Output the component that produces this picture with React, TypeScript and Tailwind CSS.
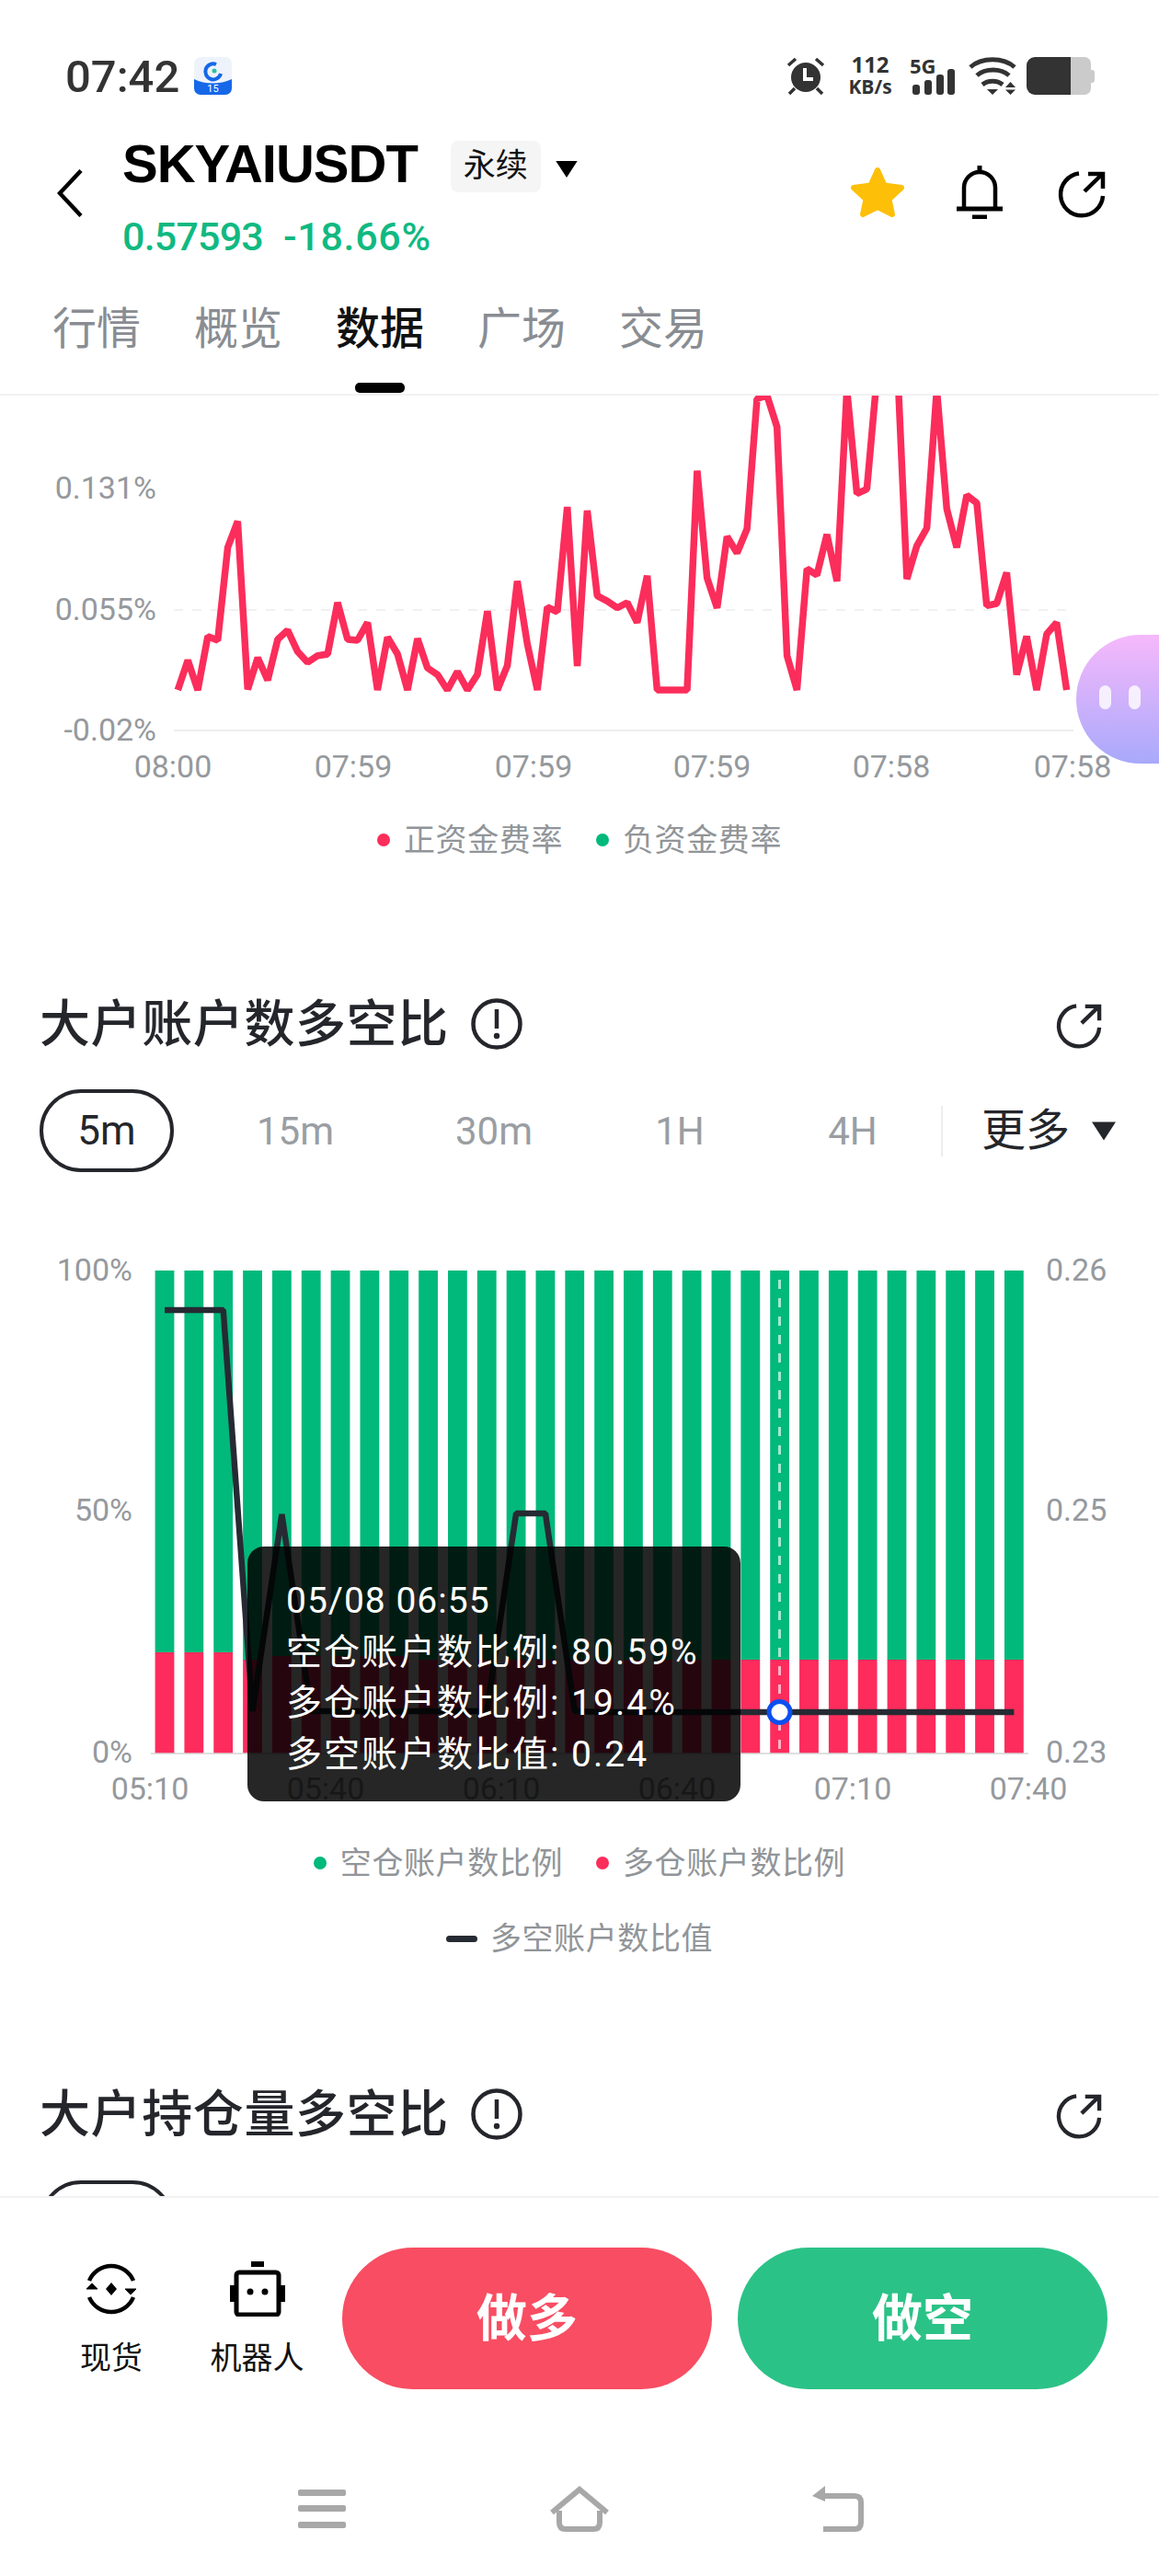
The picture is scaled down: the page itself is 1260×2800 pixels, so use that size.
const fundingA = [990,893,990,815,828,525,440,988,885,958,825,795,865,900,878,873,705,825,828,770,990,818,873,990,823,918,940,990,930,990,940,733,990,910,635,840,990,720,735,393,912,405,683,700,722,705,770];
const fundingB = [617,990,990,990,990,275,625,722,490,543,465,40,30,132,878,990,595,615,483,635,10,350,335,-30,-100,-110,628,520,462,10,400,525,355,380,715,708,607,940,815,990,808,770,990];
const fundingPoints = [...fundingA, ...fundingB]
  .map((py, i) => `${(193.3 + i * 10.857).toFixed(1)},${(420 + py / 3).toFixed(1)}`)
  .join(" ");

const barLeft = (i: number) => 168.6 + i * 31.84;
const redTop = (i: number) => (i < 3 ? 1796 : i >= 4 && i <= 8 ? 1800 : 1804);
const barIdx = Array.from({ length: 30 }, (_, i) => i);
const ratioY = [1424,1424,1424,1860,1646,1860,1860,1860,1860,1860,1860,1860,1645,1645,1860];
const ratioPoints = barIdx
  .map((i) => `${(barLeft(i) + 10.4).toFixed(1)},${i < ratioY.length ? ratioY[i] : 1861}`)
  .join(" ");

const ShareIcon = ({ className }: { className: string }) => (
  <svg viewBox="0 0 52 52" fill="none" stroke="currentColor" strokeWidth="4.5" className={className}>
    <path d="M23 3.5A23 23 0 1 0 49 28" />
    <path d="M29 23 48 4.5M33 4H49V20" />
  </svg>
);

const InfoIcon = () => (
  <svg viewBox="0 0 56 56" fill="none" className="h-[56px] w-[56px]">
    <circle cx="28" cy="28" r="25.5" stroke="#24262b" strokeWidth="4.5" />
    <path d="M28 12V33" stroke="#24262b" strokeWidth="4.5" />
    <circle cx="28" cy="41" r="3.2" fill="#24262b" />
  </svg>
);

const Caret = ({ className }: { className: string }) => (
  <svg viewBox="0 0 26 20" className={className}>
    <path d="M0 0H26L13 20Z" fill="currentColor" />
  </svg>
);

const StatusBar = () => (
  <div className="flex h-[140px] items-start pt-[58px] pl-[71px] text-[#333]">
    <span className="mt-[1px] text-[49px] leading-[50px] font-medium">07:42</span>
    <svg viewBox="0 0 41 41" className="mt-[4px] ml-[16px] h-[41px] w-[41px]">
      <rect width="41" height="41" rx="7" fill="#eef3fb" />
      <path d="M0 24C12 30 28 30 41 24V34a7 7 0 0 1-7 7H7a7 7 0 0 1-7-7Z" fill="#1668e8" />
      <path d="M24 8A8.5 8.5 0 1 0 29 18" fill="none" stroke="#1668e8" strokeWidth="4" />
      <circle cx="22" cy="15" r="2.5" fill="#2bc2a0" />
      <text x="20.5" y="38" textAnchor="middle" fontSize="11" fill="#fff">15</text>
    </svg>
    <div className="ml-auto mr-[70px] flex items-start">
      <svg viewBox="0 0 42 41" className="mt-[4px] h-[41px] w-[42px]">
        <circle cx="21" cy="22" r="16" fill="#333" />
        <path d="M20 12V24H29" fill="none" stroke="#fff" strokeWidth="4" />
        <path d="M2 9 10 2M40 9 32 2M3 40 9 34M39 40 33 34" stroke="#333" strokeWidth="3.5" />
      </svg>
      <div className="ml-[24px] flex w-[50px] flex-col items-center font-['Open_Sans',sans-serif] font-bold">
        <span className="text-[24px] leading-[24px]">112</span>
        <span className="text-[21px] leading-[24px] whitespace-nowrap">KB/s</span>
      </div>
      <div className="relative ml-[18px] h-[45px] w-[50px]">
        <span className="absolute top-[1px] left-0 font-['Open_Sans',sans-serif] text-[22px] leading-[24px] font-bold">5G</span>
        <svg viewBox="0 0 46 28" className="absolute top-[17px] left-[3px] h-[28px] w-[46px]">
          <rect x="0" y="17" width="8" height="11" rx="3" fill="#333" />
          <rect x="13" y="12" width="8" height="16" rx="3" fill="#333" />
          <rect x="26" y="6" width="8" height="22" rx="3" fill="#333" />
          <rect x="38" y="0" width="8" height="28" rx="3" fill="#333" />
        </svg>
      </div>
      <svg viewBox="0 0 52 41" fill="none" stroke="#333" strokeWidth="5" className="mt-[4px] ml-[14px] h-[41px] w-[52px]">
        <path d="M2 11C14 0 38 0 50 11" />
        <path d="M9 20C18 12 35 12 44 20" />
        <path d="M15 30C21 25 31 25 37 30" />
        <path d="M20 35H32L26 41ZM45.500 27 51 33H40ZM40 35.500H51L45.500 41Z" fill="#333" stroke="none" />
      </svg>
      <div className="mt-[4px] ml-[11px] flex h-[41px] w-[74px] items-center">
        <div className="h-full w-[48px] rounded-l-[9px] bg-[#333]" />
        <div className="h-full w-[22px] rounded-r-[7px] bg-[#cbcbcb]" />
        <div className="h-[14px] w-[4px] rounded-r-[3px] bg-[#cbcbcb]" />
      </div>
    </div>
  </div>
);

const tabs = ["行情", "概览", "数据", "广场", "交易"];

const Header = () => (
  <header className="h-[430px] shrink-0 border-b-[2px] border-[#f2f2f3]">
    <StatusBar />
    <div className="flex h-[140px] items-start">
      <svg viewBox="0 0 28 52" fill="none" className="mt-[44px] ml-[62px] h-[52px] w-[28px]">
        <path d="M26 1.500 3 26 26 50.500" stroke="#000" strokeWidth="4.500" />
      </svg>
      <div className="ml-[43px]">
        <div className="flex items-start">
          <h1 className="mt-[5px] font-['Liberation_Sans',sans-serif] text-[58px] leading-[66px] font-bold tracking-[-1px] text-black">SKYAIUSDT</h1>
          <span className="mt-[13px] ml-[36px] flex h-[56px] w-[98px] items-center justify-center rounded-[8px] bg-[#f5f5f5] text-[35px] text-[#111]">永续</span>
          <Caret className="mt-[35px] ml-[15px] h-[18px] w-[26px] text-black" />
        </div>
        <p className="mt-[21px] text-[43px] leading-[50px] font-medium whitespace-nowrap text-[#10b981]">
          <span className="tracking-[-0.8px]">0.57593</span>
          <span className="ml-[22px] tracking-[0.7px]">-18.66%</span>
        </p>
      </div>
      <svg viewBox="0 0 60 56" className="mt-[41px] ml-auto h-[56px] w-[60px]">
        <path d="M30 4 37.500 20.500 56 23 42.500 35.500 46 52 30 44 14 52 17.500 35.500 4 23 22.500 20.500Z" fill="#fdbf08" stroke="#fdbf08" strokeWidth="6" strokeLinejoin="round" />
      </svg>
      <svg viewBox="0 0 50 58" fill="none" stroke="#000" className="mt-[40px] ml-[56px] h-[58px] w-[50px]">
        <path d="M25 0V6" strokeWidth="5" />
        <path d="M8 47V24A17 17 0 0 1 42 24V47" strokeWidth="4.500" />
        <path d="M0 47H50" strokeWidth="5" />
        <path d="M17 56H33" strokeWidth="5" />
      </svg>
      <ShareIcon className="mt-[45px] mr-[58px] ml-[60px] h-[52px] w-[52px] text-black" />
    </div>
    <nav className="relative flex h-[148px] gap-[58px] pt-[50px] pl-[57px] text-[48px] leading-[56px] text-[#898d92]">
      {tabs.map((t) => (
        <span key={t} className={t === "数据" ? "font-medium text-[#111]" : ""}>{t}</span>
      ))}
      <span className="absolute top-[136px] left-[386px] h-[11px] w-[54px] rounded-[5px] bg-black" />
    </nav>
  </header>
);

const FundingChart = () => (
  <svg viewBox="0 430 1260 430" className="block h-[430px] w-[1260px] overflow-hidden">
    <path d="M189 663H1167" stroke="#f1f1f1" strokeWidth="2" strokeDasharray="10 10" />
    <path d="M189 794H1167" stroke="#eeeeee" strokeWidth="2" />
    <polyline points={fundingPoints} fill="none" stroke="#fb2d5b" strokeWidth="7.500" strokeLinejoin="bevel" />
    <g fill="#95999d" fontSize="34" textAnchor="end">
      <text x="170" y="542">0.131%</text>
      <text x="170" y="674">0.055%</text>
      <text x="170" y="805">-0.02%</text>
    </g>
    <g fill="#95999d" fontSize="34" textAnchor="middle">
      <text x="188" y="845">08:00</text>
      <text x="384" y="845">07:59</text>
      <text x="580" y="845">07:59</text>
      <text x="774" y="845">07:59</text>
      <text x="969" y="845">07:58</text>
      <text x="1166" y="845">07:58</text>
    </g>
  </svg>
);

const LegendDot = ({ color, label }: { color: string; label: string }) => (
  <div className="flex items-center gap-[15px]">
    <span className={`h-[14px] w-[14px] rounded-full ${color}`} />
    <span>{label}</span>
  </div>
);

const SectionHeading = ({ title, className }: { title: string; className: string }) => (
  <div className={`flex h-[60px] items-center justify-between pr-[62px] pl-[43px] ${className}`}>
    <div className="flex items-center gap-[24px]">
      <h2 className="text-[55px] leading-[60px] font-medium tracking-[0.6px] text-[#24262b]">{title}</h2>
      <InfoIcon />
    </div>
    <ShareIcon className="mt-[4px] h-[50px] w-[50px] text-[#24262b]" />
  </div>
);

const Periods = () => (
  <div className="flex h-[90px] items-center pl-[43px] text-[42px] text-[#9a9ea3]">
    <span className="flex h-[90px] w-[146px] items-center justify-center rounded-full border-[4px] border-[#24262b] text-[44px] text-[#24262b]">5m</span>
    <span className="ml-[26px] w-[212px] text-center">15m</span>
    <span className="w-[220px] text-center">30m</span>
    <span className="w-[184px] text-center">1H</span>
    <span className="w-[192px] text-center">4H</span>
    <span className="h-[55px] w-[2px] bg-[#eeeeee]" />
    <span className="ml-[42px] text-[48px] text-[#24262b]">更多</span>
    <Caret className="ml-[24px] h-[23px] w-[26px] text-[#24262b]" />
  </div>
);

const RatioChart = () => (
  <div className="relative h-[640px] w-[1260px]">
    <svg viewBox="0 1340 1260 640" className="block h-[640px] w-[1260px]">
      {barIdx.map((i) => (
        <g key={i}>
          <rect x={barLeft(i)} y="1381" width="20.800" height={redTop(i) - 1381} fill="#01b97b" />
          <rect x={barLeft(i)} y={redTop(i)} width="20.800" height={1906 - redTop(i)} fill="#fd2c5c" />
        </g>
      ))}
      <path d="M164 1906H1118" stroke="#d4d4d6" strokeWidth="1.500" />
      <path d="M847.500 1391V1901" stroke="#fff" strokeOpacity="0.65" strokeWidth="3" strokeDasharray="10 10" />
      <polyline points={ratioPoints} fill="none" stroke="#262a33" strokeWidth="6.500" strokeLinejoin="bevel" />
      <circle cx="847.500" cy="1861" r="11.500" fill="#fff" stroke="#0b4ff0" strokeWidth="5" />
      <g fill="#95999d" fontSize="34" textAnchor="end">
        <text x="144" y="1392">100%</text>
        <text x="144" y="1653">50%</text>
        <text x="144" y="1916">0%</text>
      </g>
      <g fill="#95999d" fontSize="34">
        <text x="1137" y="1392">0.26</text>
        <text x="1137" y="1653">0.25</text>
        <text x="1137" y="1916">0.23</text>
      </g>
      <g fill="#95999d" fontSize="34" textAnchor="middle">
        <text x="163" y="1956">05:10</text>
        <text x="354" y="1956">05:40</text>
        <text x="545" y="1956">06:10</text>
        <text x="736" y="1956">06:40</text>
        <text x="927" y="1956">07:10</text>
        <text x="1118" y="1956">07:40</text>
      </g>
    </svg>
    <div className="absolute top-[341px] left-[269px] h-[277px] w-[536px] rounded-[18px] bg-[#000000d9] pt-[32px] pl-[42px] text-[39px] leading-[55.500px] tracking-[2px] whitespace-nowrap text-white">
      <p className="tracking-[1px]">05/08 06:55</p>
      <p>空仓账户数比例: 80.59%</p>
      <p>多仓账户数比例: 19.4%</p>
      <p>多空账户数比值: 0.24</p>
    </div>
  </div>
);

const Footer = () => (
  <footer className="h-[413px] shrink-0 border-t-[2px] border-[#f2f2f3]">
    <div className="flex items-start pt-[54px]">
      <div className="mt-[15px] flex w-[150px] flex-col items-center pl-[92px] text-[34px] leading-[40px] text-[#111] [&>*]:shrink-0">
        <svg viewBox="0 0 60 60" fill="none" stroke="#000" strokeWidth="4.500" className="h-[60px] w-[60px]">
          <path d="M6 21A26 26 0 0 1 54 21M54 39A26 26 0 0 1 6 39" />
          <path d="M3 30 9 24 15 30ZM45 30 51 36 57 30Z" fill="#000" strokeWidth="1" />
          <path d="M30 23 36 30 30 37 24 30Z" fill="#000" stroke="none" />
        </svg>
        <span className="mt-[25px] whitespace-nowrap">现货</span>
      </div>
      <div className="mt-[15px] ml-[79px] flex w-[101px] flex-col items-center text-[34px] leading-[40px] text-[#111]">
        <svg viewBox="0 0 60 60" fill="none" className="h-[60px] w-[60px]">
          <rect x="23" y="0" width="14" height="6" fill="#000" />
          <rect x="7" y="12" width="46" height="46" rx="3" stroke="#000" strokeWidth="5" />
          <rect x="0" y="26" width="5" height="18" fill="#000" />
          <rect x="55" y="26" width="5" height="18" fill="#000" />
          <circle cx="22" cy="33" r="3.500" fill="#000" />
          <circle cx="38" cy="33" r="3.500" fill="#000" />
        </svg>
        <span className="mt-[25px] whitespace-nowrap">机器人</span>
      </div>
      <button className="ml-[42px] flex h-[154px] w-[402px] items-center justify-center rounded-full bg-[#f84d62] text-[55px] font-bold text-white">做多</button>
      <button className="ml-[28px] flex h-[154px] w-[402px] items-center justify-center rounded-full bg-[#2bc287] text-[55px] font-bold text-white">做空</button>
    </div>
    <div className="mt-[105px] flex items-center">
      <svg viewBox="0 0 52 42" className="ml-[324px] h-[42px] w-[52px]">
        <rect y="0" width="52" height="7" rx="2" fill="#a8a8a8" />
        <rect y="17" width="52" height="7" rx="2" fill="#a8a8a8" />
        <rect y="35" width="52" height="7" rx="2" fill="#a8a8a8" />
      </svg>
      <svg viewBox="0 0 66 50" fill="none" stroke="#a8a8a8" strokeWidth="6" className="ml-[221px] h-[50px] w-[66px]">
        <path d="M3 29 33 4 63 29" />
        <path d="M11 27V40Q11 47 18 47H48Q55 47 55 40V27" />
      </svg>
      <svg viewBox="0 0 56 50" fill="none" className="ml-[220px] h-[50px] w-[56px]">
        <path d="M6 11H46Q53 11 53 18V40Q53 47 46 47H12" stroke="#a8a8a8" strokeWidth="6" />
        <path d="M14 0V17L0 11Z" fill="#a8a8a8" />
      </svg>
    </div>
  </footer>
);

export default function App() {
  return (
    <div className="relative flex h-[2800px] w-[1260px] flex-col overflow-hidden bg-white font-[Roboto,'Noto_Sans_CJK_SC',sans-serif]">
      <Header />
      <main className="min-h-0 flex-1 overflow-hidden">
        <FundingChart />
        <div className="mt-[33px] flex h-[40px] items-center justify-center gap-[36px] text-[34px] tracking-[0.6px] text-[#919599]">
          <LegendDot color="bg-[#fb2d5b]" label="正资金费率" />
          <LegendDot color="bg-[#01b97b]" label="负资金费率" />
        </div>
        <SectionHeading title="大户账户数多空比" className="mt-[150px]" />
        <div className="mt-[41px]"><Periods /></div>
        <div className="mt-[66px]"><RatioChart /></div>
        <div className="mt-[25px] flex h-[40px] items-center justify-center gap-[36px] text-[34px] tracking-[0.6px] text-[#919599]">
          <LegendDot color="bg-[#01b97b]" label="空仓账户数比例" />
          <LegendDot color="bg-[#fb2d5b]" label="多仓账户数比例" />
        </div>
        <div className="mt-[42px] flex h-[40px] items-center justify-center gap-[14px] text-[34px] tracking-[0.6px] text-[#919599]">
          <span className="h-[7px] w-[34px] rounded-full bg-[#262a33]" />
          <span>多空账户数比值</span>
        </div>
        <SectionHeading title="大户持仓量多空比" className="mt-[141px]" />
        {/* only the top of the next pill shows above the bottom bar */}
        <div className="mt-[42px] ml-[43px] h-[90px] w-[146px] rounded-full border-[4px] border-[#24262b]" />
      </main>
      <Footer />
      {/* floating assistant bubble */}
      <div className="absolute top-[690px] left-[1170px] flex h-[140px] w-[90px] gap-[19px] rounded-l-[70px] bg-gradient-to-b from-[#f6b8fb] to-[#a8a9fb] pt-[55px] pl-[25px]">
        <span className="h-[26px] w-[13px] rounded-full bg-white/80" />
        <span className="h-[26px] w-[13px] rounded-full bg-white/80" />
      </div>
    </div>
  );
}
